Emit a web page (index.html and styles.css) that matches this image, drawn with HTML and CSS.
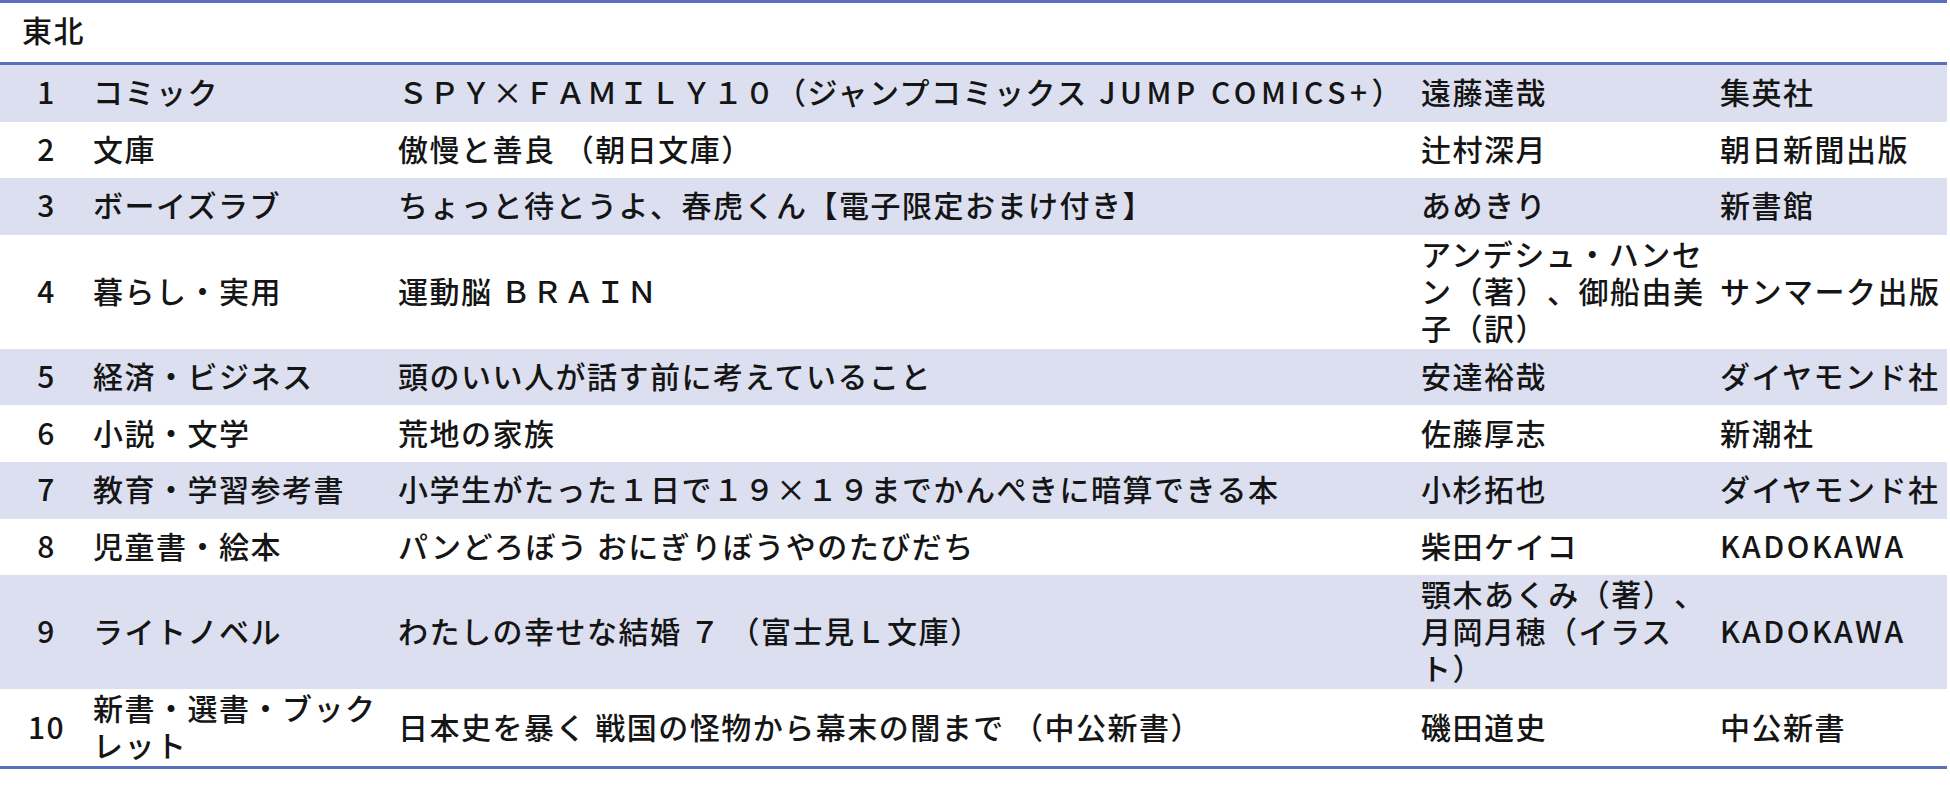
FILE: index.html
```html
<!DOCTYPE html>
<html lang="ja">
<head>
<meta charset="utf-8">
<link rel="stylesheet" href="styles.css">
</head>
<body>
<table class="rank-table">
  <colgroup>
    <col class="c-rank"><col class="c-genre"><col class="c-title"><col class="c-author"><col class="c-pub">
  </colgroup>
  <thead>
    <tr class="region-row"><th colspan="5">東北</th></tr>
  </thead>
  <tbody>
    <tr class="alt"><td class="rank">1</td><td>コミック</td><td>ＳＰＹ×ＦＡＭＩＬＹ１０（ジャンプコミックス<span class="latin-wide"> JUMP COMICS+</span>）</td><td>遠藤達哉</td><td>集英社</td></tr>
    <tr><td class="rank">2</td><td>文庫</td><td>傲慢と善良 （朝日文庫）</td><td>辻村深月</td><td>朝日新聞出版</td></tr>
    <tr class="alt"><td class="rank">3</td><td>ボーイズラブ</td><td>ちょっと待とうよ、春虎くん【電子限定おまけ付き】</td><td>あめきり</td><td>新書館</td></tr>
    <tr><td class="rank">4</td><td>暮らし・実用</td><td>運動脳 ＢＲＡＩＮ</td><td>アンデシュ・ハンセン（著）、御船由美子（訳）</td><td>サンマーク出版</td></tr>
    <tr class="alt"><td class="rank">5</td><td>経済・ビジネス</td><td>頭のいい人が話す前に考えていること</td><td>安達裕哉</td><td>ダイヤモンド社</td></tr>
    <tr><td class="rank">6</td><td>小説・文学</td><td>荒地の家族</td><td>佐藤厚志</td><td>新潮社</td></tr>
    <tr class="alt"><td class="rank">7</td><td>教育・学習参考書</td><td>小学生がたった１日で１９×１９までかんぺきに暗算できる本</td><td>小杉拓也</td><td>ダイヤモンド社</td></tr>
    <tr><td class="rank">8</td><td>児童書・絵本</td><td>パンどろぼう おにぎりぼうやのたびだち</td><td>柴田ケイコ</td><td class="latin">KADOKAWA</td></tr>
    <tr class="alt"><td class="rank">9</td><td>ライトノベル</td><td>わたしの幸せな結婚 ７ （富士見Ｌ文庫）</td><td>顎木あくみ（著）、月岡月穂（イラスト）</td><td class="latin">KADOKAWA</td></tr>
    <tr><td class="rank">10</td><td>新書・選書・ブックレット</td><td>日本史を暴く 戦国の怪物から幕末の闇まで （中公新書）</td><td>磯田道史</td><td>中公新書</td></tr>
  </tbody>
</table>
</body>
</html>
```

FILE: styles.css
```css
html, body {
  margin: 0;
  padding: 0;
  background: #ffffff;
}

body {
  font-family: "Noto Sans CJK JP", "Noto Sans", sans-serif;
  font-size: 30px;
  font-weight: 500;
  color: #151515;
}

.rank-table {
  width: 1947px;
  table-layout: fixed;
  border-collapse: collapse;
  border-top: 3px solid #5b6fbf;
  border-bottom: 3px solid #5b6fbf;
  letter-spacing: 1.5px;
  text-spacing-trim: space-all;
}

.c-rank { width: 93px; }
.c-genre { width: 305px; }
.c-title { width: 1023px; }
.c-author { width: 299px; }
.c-pub { width: 227px; }

.region-row th {
  text-align: left;
  font-weight: 500;
  height: 51px;
  padding: 0 0 8px 22px;
  vertical-align: middle;
  line-height: 38px;
  border-bottom: 3px solid #5b6fbf;
}

.rank-table td {
  padding: 0 0 3px 0;
  height: 53.6px;
  line-height: 37px;
  vertical-align: middle;
}

.rank-table td.rank {
  text-align: center;
}

.rank-table td.latin {
  letter-spacing: 2.5px;
}

.latin-wide {
  letter-spacing: 4.5px;
}

.rank-table tr.alt td {
  background: #dcdff0;
}
```
